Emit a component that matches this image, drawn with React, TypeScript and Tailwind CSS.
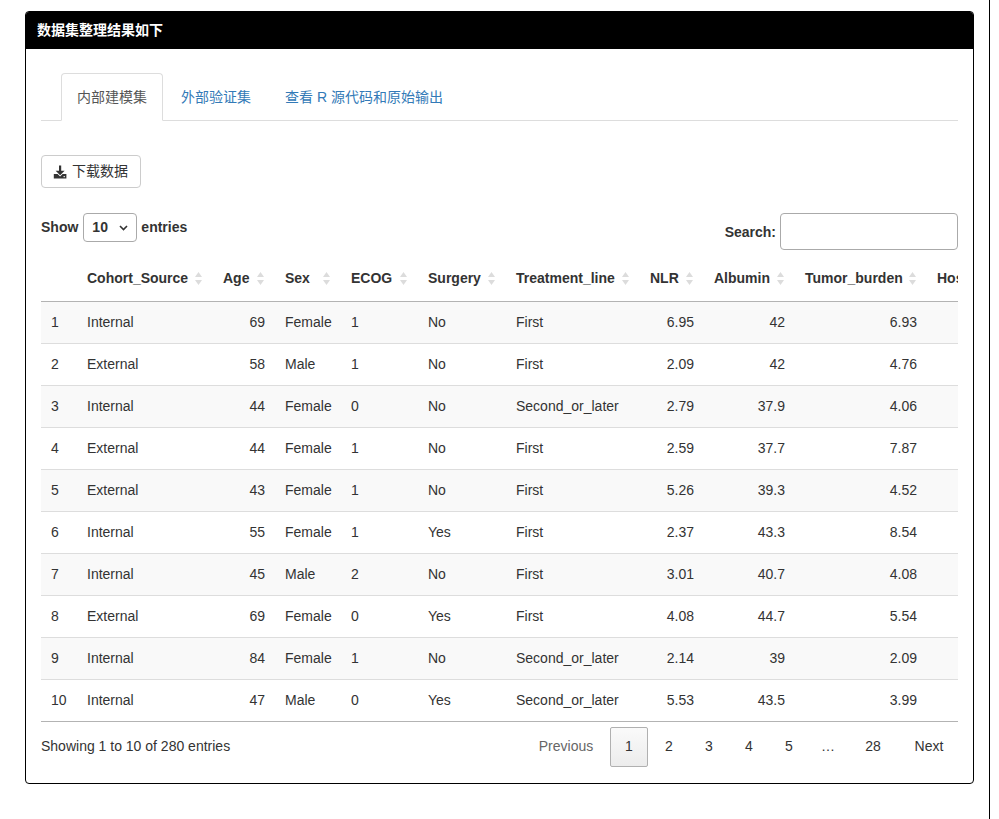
import type { ReactNode } from 'react'

const FONT = { fontFamily: '"Liberation Sans", "Noto Sans CJK SC", Arial, sans-serif' }

interface Col {
  key: string
  label: string
  width: number
  num?: boolean
}

const cols: Col[] = [
  { key: 'idx', label: '', width: 36 },
  { key: 'cohort', label: 'Cohort_Source', width: 136 },
  { key: 'age', label: 'Age', width: 62, num: true },
  { key: 'sex', label: 'Sex', width: 66 },
  { key: 'ecog', label: 'ECOG', width: 77 },
  { key: 'surgery', label: 'Surgery', width: 88 },
  { key: 'line', label: 'Treatment_line', width: 134 },
  { key: 'nlr', label: 'NLR', width: 64, num: true },
  { key: 'alb', label: 'Albumin', width: 91, num: true },
  { key: 'tumor', label: 'Tumor_burden', width: 132, num: true },
  { key: 'hosp', label: 'Hospital_level', width: 150, num: true },
]

const rows: (string | number)[][] = [
  [1, 'Internal', 69, 'Female', 1, 'No', 'First', '6.95', 42, '6.93', ''],
  [2, 'External', 58, 'Male', 1, 'No', 'First', '2.09', 42, '4.76', ''],
  [3, 'Internal', 44, 'Female', 0, 'No', 'Second_or_later', '2.79', '37.9', '4.06', ''],
  [4, 'External', 44, 'Female', 1, 'No', 'First', '2.59', '37.7', '7.87', ''],
  [5, 'External', 43, 'Female', 1, 'No', 'First', '5.26', '39.3', '4.52', ''],
  [6, 'Internal', 55, 'Female', 1, 'Yes', 'First', '2.37', '43.3', '8.54', ''],
  [7, 'Internal', 45, 'Male', 2, 'No', 'First', '3.01', '40.7', '4.08', ''],
  [8, 'External', 69, 'Female', 0, 'Yes', 'First', '4.08', '44.7', '5.54', ''],
  [9, 'Internal', 84, 'Female', 1, 'No', 'Second_or_later', '2.14', 39, '2.09', ''],
  [10, 'Internal', 47, 'Male', 0, 'Yes', 'Second_or_later', '5.53', '43.5', '3.99', ''],
]

function SortIcon() {
  return (
    <svg width="7" height="13" viewBox="0 0 7 13" className="shrink-0">
      <polygon points="3.5,0 7,5 0,5" fill="#dcdcdc" />
      <polygon points="0,8 7,8 3.5,13" fill="#dcdcdc" />
    </svg>
  )
}

function DownloadIcon() {
  return (
    <svg width="14" height="14" viewBox="0 0 14 14">
      <rect x="6" y="0.5" width="2.2" height="6" fill="#333" />
      <polygon points="2.6,5.8 11.6,5.8 7.1,10.2" fill="#333" />
      <path d="M0.8 9 H4.6 L7.1 11.4 L9.6 9 H13.4 V13.4 H0.8 Z" fill="#333" />
      <rect x="10.6" y="11" width="1.2" height="1.2" fill="#fff" />
    </svg>
  )
}

function Tab({ active, children }: { active?: boolean; children: ReactNode }) {
  return (
    <li
      className={
        active
          ? 'h-[48px] -mb-px px-[15px] flex items-center border border-[#ddd] border-b-white bg-white rounded-t-[4px] text-[#555] mr-[2px]'
          : 'h-[48px] -mb-px px-[15px] flex items-center border border-transparent text-[#337ab7] mr-[2px]'
      }
    >
      {children}
    </li>
  )
}

function PageBtn({ w, active, muted, children }: { w: string; active?: boolean; muted?: boolean; children: ReactNode }) {
  return (
    <div
      className={`${w} h-[40px] flex items-center justify-center rounded-[2px] border ${
        active ? 'border-[#b0b0b0] bg-gradient-to-b from-[#fafafa] to-[#ececec] text-[#333]' : 'border-transparent'
      } ${muted ? 'text-[#666]' : 'text-[#333]'}`}
    >
      {children}
    </div>
  )
}

export default function App() {
  return (
    <div className="flex w-[999px] h-[819px] bg-white text-[14px] text-[#333]" style={FONT}>
      <div className="w-[990px] h-[819px] border-r border-black pt-[11px] pl-[25px]">
        <div className="w-[949px] border border-black rounded-[4px] overflow-hidden bg-white">
          <div className="h-[37px] bg-black text-white font-bold flex items-center px-[11px]">数据集整理结果如下</div>

          <div className="px-[15px] pt-[24px] pb-[16px]">
            <ul className="flex border-b border-[#ddd] pl-[20px]">
              <Tab active>内部建模集</Tab>
              <Tab>外部验证集</Tab>
              <Tab>查看 R 源代码和原始输出</Tab>
            </ul>

            <div className="mt-[34px]">
              <button className="h-[33px] w-[100px] border border-[#ccc] rounded-[4px] bg-white flex items-center gap-[5px] px-[11px] text-[#333]">
                <DownloadIcon />
                <span>下载数据</span>
              </button>
            </div>

            <div className="mt-[25px] flex justify-between items-start">
              <div className="flex items-center h-[29px] font-bold">
                <span>Show</span>
                <div className="ml-[5px] mr-[4px] w-[54px] h-[29px] border border-[#aaa] rounded-[4px] flex items-center justify-between pl-[8px] pr-[8px]">
                  <span>10</span>
                  <svg width="9" height="6" viewBox="0 0 9 6">
                    <path d="M1 1 L4.5 4.5 L8 1" stroke="#333" strokeWidth="1.6" fill="none" />
                  </svg>
                </div>
                <span>entries</span>
              </div>
              <div className="flex items-center gap-[4px]">
                <span className="font-bold pt-[1px]">Search:</span>
                <div className="w-[178px] h-[37px] border border-[#aaa] rounded-[4px] bg-white" />
              </div>
            </div>

            <div className="mt-[5px] w-[917px] overflow-hidden">
              <table className="table-fixed border-collapse" style={{ width: cols.reduce((s, c) => s + c.width, 0) }}>
                <colgroup>
                  {cols.map((c) => (
                    <col key={c.key} style={{ width: c.width }} />
                  ))}
                </colgroup>
                <thead>
                  <tr className="h-[46px] border-b border-[#b3b3b3]">
                    {cols.map((c) => (
                      <th key={c.key} className="font-bold text-left pl-[10px] pr-[11px] pt-[2px] whitespace-nowrap">
                        {c.label && (
                          <div className="flex items-center justify-between">
                            <span>{c.label}</span>
                            <SortIcon />
                          </div>
                        )}
                      </th>
                    ))}
                  </tr>
                </thead>
                <tbody>
                  {rows.map((r, i) => (
                    <tr
                      key={i}
                      className={`h-[42px] border-b ${i === rows.length - 1 ? 'border-[#b3b3b3]' : 'border-[#ddd]'} ${
                        i % 2 === 0 ? 'bg-[#f9f9f9]' : 'bg-white'
                      }`}
                    >
                      {cols.map((c, j) => (
                        <td key={c.key} className={`px-[10px] whitespace-nowrap ${c.num ? 'text-right' : 'text-left'}`}>
                          {r[j]}
                        </td>
                      ))}
                    </tr>
                  ))}
                </tbody>
              </table>
            </div>

            <div className="mt-[5px] flex items-center justify-between h-[40px]">
              <span>Showing 1 to 10 of 280 entries</span>
              <div className="flex items-center gap-[2px]">
                <PageBtn w="w-[84px]" muted>Previous</PageBtn>
                <PageBtn w="w-[38px]" active>1</PageBtn>
                <PageBtn w="w-[38px]">2</PageBtn>
                <PageBtn w="w-[38px]">3</PageBtn>
                <PageBtn w="w-[38px]">4</PageBtn>
                <PageBtn w="w-[38px]">5</PageBtn>
                <PageBtn w="w-[36px]">…</PageBtn>
                <PageBtn w="w-[50px]">28</PageBtn>
                <PageBtn w="w-[58px]">Next</PageBtn>
              </div>
            </div>
          </div>
        </div>
      </div>
    </div>
  )
}
